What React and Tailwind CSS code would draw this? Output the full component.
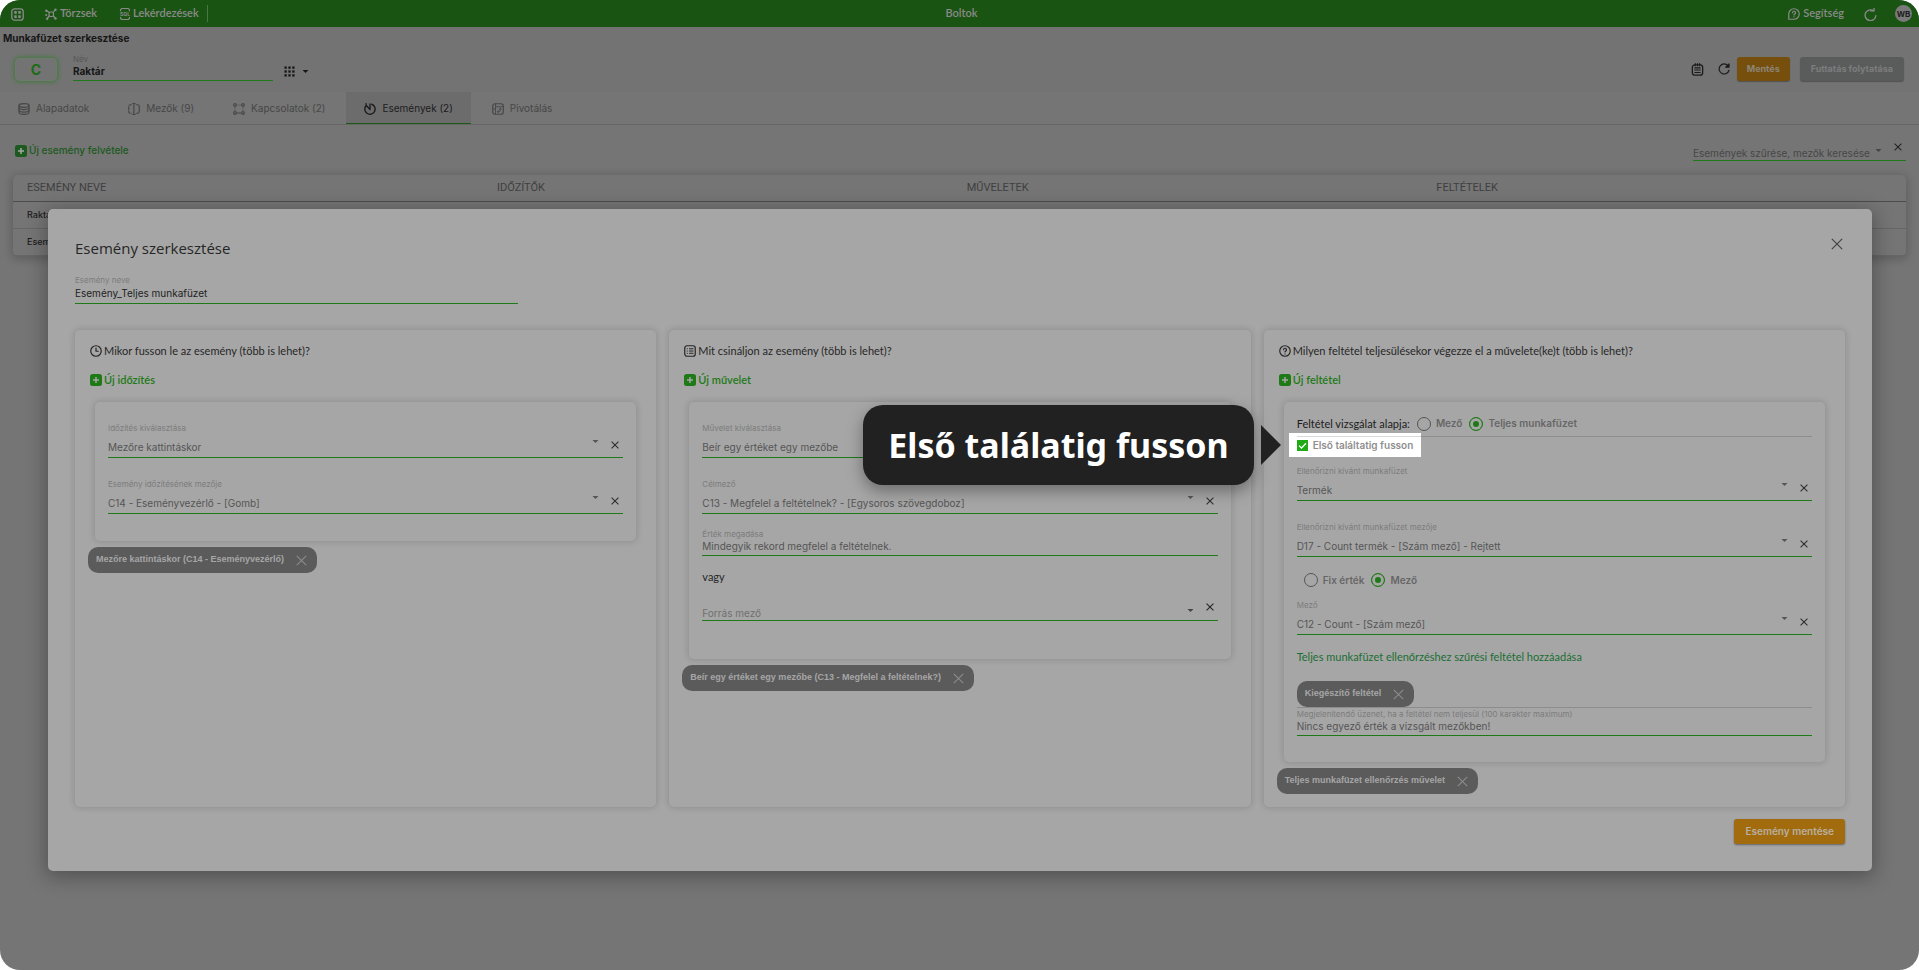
import { useId, useState } from "react";

const tabs = [
  { id: "base", label: "Alapadatok", icon: DatabaseIcon },
  { id: "fields", label: "Mezők (9)", icon: FieldIcon },
  { id: "relations", label: "Kapcsolatok (2)", icon: RelationIcon },
  { id: "events", label: "Események (2)", icon: EventIcon },
  { id: "pivot", label: "Pivotálás", icon: PivotIcon },
];

const columns = ["ESEMÉNY NEVE", "IDŐZÍTŐK", "MŰVELETEK", "FELTÉTELEK"];
const events = ["Raktár", "Esemény"];

/* ---------- icons ---------- */

function Icon({ className = "size-3", children }) {
  return (
    <svg
      viewBox="0 0 24 24"
      fill="none"
      stroke="currentColor"
      strokeWidth="2.4"
      strokeLinecap="round"
      strokeLinejoin="round"
      aria-hidden="true"
      className={`shrink-0 ${className}`}
    >
      {children}
    </svg>
  );
}

function AppsIcon() {
  return (
    <Icon className="size-[13px]">
      <rect x="1.5" y="1.5" width="21" height="21" rx="5" />
      <g fill="currentColor" stroke="none">
        <rect x="6" y="5.5" width="4.6" height="5" rx="1" />
        <rect x="13.4" y="5.5" width="4.6" height="5" rx="1" />
        <rect x="6" y="13.5" width="4.6" height="5" rx="1" />
        <rect x="13.4" y="13.5" width="4.6" height="5" rx="1" />
      </g>
    </Icon>
  );
}

function NetworkIcon() {
  return (
    <Icon>
      <rect x="8" y="8" width="9" height="9" rx="3" />
      <path d="M8.5 9 4 6M16.5 8.5 20 4M8.5 16 5 20M16.5 16 20 19.5" />
      <g fill="currentColor" stroke="none">
        <circle cx="2.6" cy="5.4" r="2.4" />
        <circle cx="21" cy="3.4" r="2.4" />
        <circle cx="2.4" cy="14" r="2" />
        <circle cx="4.4" cy="21.4" r="2.4" />
        <circle cx="21" cy="21" r="2.4" />
      </g>
    </Icon>
  );
}

function SqlIcon() {
  return (
    <Icon>
      <path d="M3 5.5V5a4 4 0 0 1 4-4h10a4 4 0 0 1 4 4v.5M3 18.5v.5a4 4 0 0 0 4 4h10a4 4 0 0 0 4-4v-.5" />
      <text
        x="12"
        y="15.5"
        textAnchor="middle"
        fontSize="10"
        fontWeight="700"
        fontFamily="Inter, sans-serif"
        fill="currentColor"
        stroke="none"
      >
        SQL
      </text>
    </Icon>
  );
}

function HelpBubbleIcon() {
  return (
    <Icon>
      <path d="M1.5 22.5V12A10.5 10.5 0 1 1 12 22.5Z" />
      <path d="M9 9.5a3 3 0 1 1 4.3 2.7c-.9.5-1.3.9-1.3 1.8M12 17.4v.2" />
    </Icon>
  );
}

function ReloadIcon({ className }) {
  return (
    <Icon className={className}>
      <path d="M17.5 5A10 10 0 1 0 22 14" />
      <path d="M12.5 5.4h6V0" />
    </Icon>
  );
}

function RefreshIcon() {
  return (
    <Icon>
      <path d="M20 5.5A10 10 0 1 0 22 14.5" />
      <path d="M22 2v6.5h-6.5Z" fill="currentColor" />
    </Icon>
  );
}

function NotesIcon() {
  return (
    <Icon className="size-[13px]">
      <rect x="2.5" y="3.5" width="19" height="19" rx="4.5" />
      <path d="M7 9h10M7 13h10M7 17.5h10M8 1v4M12 1v4M16 1v4" strokeWidth="2" />
    </Icon>
  );
}

function GridIcon() {
  const steps = [1, 9.5, 18];
  return (
    <Icon className="size-[11px]">
      <g fill="currentColor" stroke="none">
        {steps.map((y) =>
          steps.map((x) => <rect key={`${x}-${y}`} x={x} y={y} width="5" height="5" />)
        )}
      </g>
    </Icon>
  );
}

function DatabaseIcon() {
  return (
    <Icon>
      <ellipse cx="12" cy="5" rx="10" ry="3.6" />
      <path d="M2 5v14c0 2 4.5 3.6 10 3.6s10-1.6 10-3.6V5" />
      <path d="M2 9.7c0 2 4.500 3.6 10 3.6s10-1.6 10-3.6M2 14.500c0 2 4.500 3.6 10 3.6s10-1.6 10-3.6" />
    </Icon>
  );
}

function FieldIcon() {
  return (
    <Icon>
      <path d="M7 3.5H4.5a3 3 0 0 0-3 3v11a3 3 0 0 0 3 3H7" strokeDasharray="5 3" />
      <path d="M16.5 3.5h3a3 3 0 0 1 3 3v11a3 3 0 0 1-3 3h-3M11.8 1v22M9.5 1h4.6M9.5 23h4.6" />
    </Icon>
  );
}

function RelationIcon() {
  return (
    <Icon>
      <circle cx="4" cy="4" r="2.6" />
      <circle cx="20" cy="4" r="2.6" />
      <circle cx="4" cy="20" r="2.6" />
      <circle cx="20" cy="20" r="2.6" />
      <path d="M10 4h.1M14 4h.1M8.5 20h7M4 10v.1M4 14v.1M20 10v.1M20 14v.1" />
    </Icon>
  );
}

function EventIcon() {
  return (
    <Icon>
      <path d="M15.5 2.5A10.3 10.3 0 1 1 4.5 5L12 13V2" strokeWidth="2.8" />
      <path d="m4 1 .5 5" />
    </Icon>
  );
}

function PivotIcon() {
  return (
    <Icon>
      <rect x="1.5" y="1.5" width="21" height="21" rx="4.5" />
      <path d="M7 2v20M7 7.5h15M2 12h5" strokeWidth="1.8" />
      <path d="M16.5 11v3.5a3 3 0 0 1-3 3H11m2-2.2-2.2 2.2 2.200 2M14.5 12.5l2-2 2 2" strokeWidth="1.8" />
    </Icon>
  );
}

function ClockIcon() {
  return (
    <Icon>
      <circle cx="12" cy="12" r="10.5" />
      <path d="M12 6v6.5h4.5" />
    </Icon>
  );
}

function ListIcon() {
  return (
    <Icon>
      <rect x="1.5" y="1.5" width="21" height="21" rx="4.5" />
      <path d="M6.5 7.5h.1M6.5 12h.1M6.5 16.5h.1M11 7.5h7M11 12h7M11 16.5h7" />
    </Icon>
  );
}

function QuestionIcon() {
  return (
    <Icon>
      <circle cx="12" cy="12" r="10.5" />
      <path d="M9 9.5a3 3 0 1 1 4.3 2.7c-.9.5-1.3.9-1.3 1.8M12 17.6v.2" />
    </Icon>
  );
}

function PlusIcon() {
  return (
    <svg viewBox="0 0 12 12" aria-hidden="true" className="size-3 shrink-0">
      <rect width="12" height="12" rx="2.5" fill="currentColor" />
      <path d="M6 3v6M3 6h6" stroke="#a6a6a6" strokeWidth="1.5" />
    </svg>
  );
}

function CrossIcon({ className = "size-2", strokeWidth = 1.3 }) {
  return (
    <svg viewBox="0 0 10 10" aria-hidden="true" className={`shrink-0 ${className}`}>
      <path d="m.7.7 8.600 8.600M9.300.7.7 9.300" stroke="currentColor" strokeWidth={strokeWidth} />
    </svg>
  );
}

function Caret() {
  return (
    <svg viewBox="0 0 8 4" aria-hidden="true" className="h-[3px] w-[7px] shrink-0">
      <path d="M0 0h8L4 4Z" fill="currentColor" />
    </svg>
  );
}

/* ---------- form parts ---------- */

function TextField({
  label,
  value,
  className = "",
  labelClass = "text-[#7c7c7c]",
  inputClass = "h-4 text-[#555]",
}) {
  const id = useId();
  return (
    <div className={`flex flex-col ${className}`}>
      <label htmlFor={id} className={`text-[8px] leading-3 ${labelClass}`}>
        {label}
      </label>
      <input
        id={id}
        defaultValue={value}
        className={`w-full border-b border-[#1e7a17] bg-transparent pb-[3px] text-[10px] leading-3 outline-none ${inputClass}`}
      />
    </div>
  );
}

function SelectField({ label, value, className = "" }) {
  const id = useId();
  return (
    <div className={`flex flex-col ${className}`}>
      <label htmlFor={id} className="text-[8px] leading-3 text-[#7c7c7c]">
        {label}
      </label>
      <div className="flex h-6 items-center border-b border-[#1e7a17] pr-1">
        <select
          id={id}
          className="min-w-0 flex-1 appearance-none bg-transparent pt-0.5 text-[10px] leading-4 text-[#555] outline-none"
        >
          <option>{value}</option>
        </select>
        <span className="pb-2 text-[#555]">
          <Caret />
        </span>
        <button type="button" aria-label="Törlés" className="ml-3 pb-0.5 text-[#2c2c2c]">
          <CrossIcon />
        </button>
      </div>
    </div>
  );
}

function PlainSelect({ label, className = "", color = "text-[#707070]" }) {
  return (
    <div className={`flex h-6 items-center border-b border-[#1e7a17] pr-1 ${className}`}>
      <select
        aria-label={label}
        className={`min-w-0 flex-1 appearance-none bg-transparent pt-2 text-[10px] leading-4 outline-none ${color}`}
      >
        <option>{label}</option>
      </select>
      <span className="pt-1 text-[#444]">
        <Caret />
      </span>
      <button type="button" aria-label="Törlés" className="ml-3 pb-1 text-[#222]">
        <CrossIcon />
      </button>
    </div>
  );
}

function Radio({ name, label, checked, onChange }) {
  return (
    <label className="flex items-center gap-[5px] text-[10px] font-semibold text-[#666]">
      <input
        type="radio"
        name={name}
        checked={checked}
        onChange={onChange}
        className="size-3.5 appearance-none rounded-full border border-[#555] checked:border-[#1e7a17] checked:bg-[#1e7a17] checked:shadow-[inset_0_0_0_3px_#a6a6a6]"
      />
      {label}
    </label>
  );
}

function Chip({ children, className = "" }) {
  return (
    <div
      className={`flex h-[26px] w-fit items-center gap-3 rounded-[10px] bg-[#5b5b5b] pr-2.5 pl-2 font-['Liberation_Sans'] text-[9px] font-bold text-[#a6a6a6] ${className}`}
    >
      {children}
      <button type="button" aria-label="Eltávolítás" className="text-[#8c8c8c]">
        <CrossIcon className="size-[11px]" strokeWidth={1} />
      </button>
    </div>
  );
}

function Card({ icon: HeadIcon, title, action, chip, children, innerClass = "" }) {
  return (
    <section className="rounded-[5px] pt-[13px] pr-5 pb-[13px] shadow-[0_0_6px_1px_rgba(0,0,0,0.14)]">
      <h3 className="ml-[15px] flex h-4 items-center gap-0.5 font-['Lato'] text-[11px] text-[#262626]">
        <HeadIcon />
        {title}
      </h3>
      <button
        type="button"
        className="mt-[13px] ml-[15px] flex h-4 items-center gap-0.5 font-['Lato'] text-[11px] font-semibold text-[#1e7a17]"
      >
        <PlusIcon />
        {action}
      </button>
      <div
        className={`mt-3.5 ml-5 flex flex-col rounded-[5px] px-[13px] shadow-[0_0_6px_1px_rgba(0,0,0,0.14)] ${innerClass}`}
      >
        {children}
      </div>
      <Chip className="mt-1.5 ml-[13px]">{chip}</Chip>
    </section>
  );
}

/* ---------- page ---------- */

function TopBar() {
  return (
    <header className="grid h-[27px] grid-cols-[1fr_auto_1fr] items-center bg-[#1a5413] pr-[7px] pl-[11px] font-['Lato'] text-[11px] font-semibold text-[#8a8a8a]">
      <nav className="flex items-center">
        <a href="#apps" aria-label="Alkalmazások" className="pt-0.5">
          <AppsIcon />
        </a>
        <a href="#masters" className="ml-[21px] flex items-center gap-[3px]">
          <NetworkIcon />
          Törzsek
        </a>
        <a href="#queries" className="ml-[22px] flex items-center gap-0.5">
          <SqlIcon />
          Lekérdezések
        </a>
        <span className="ml-2 h-[17px] border-l border-[#4a7545]" />
      </nav>
      <span>Boltok</span>
      <div className="flex items-center justify-end">
        <a href="#help" className="flex items-center gap-[3px]">
          <HelpBubbleIcon />
          Segítség
        </a>
        <button type="button" aria-label="Frissítés" className="ml-5 pt-0.5">
          <ReloadIcon className="size-[13px]" />
        </button>
        <span className="ml-[18px] grid size-[17px] place-items-center rounded-full bg-[#7a7a7a] font-['Inter'] text-[8px] font-bold text-[#1c1c1c]">
          WB
        </span>
      </div>
    </header>
  );
}

function EditorHeader() {
  return (
    <div className="bg-[#737373] pt-[3px] pb-[11px]">
      <h1 className="ml-[3px] text-[10px] leading-4 font-bold text-[#161616]">Munkafüzet szerkesztése</h1>
      <div className="mt-[7px] flex h-7 items-end px-[15px]">
        <span className="grid h-[23px] w-[42px] place-items-center rounded-[5px] text-[14px] font-bold text-[#1d6b16] shadow-[0_0_4px_1px_#3f7a3a,inset_0_0_2px_#6a8a67]">
          C
        </span>
        <TextField
          label="Név"
          value="Raktár"
          className="ml-4 w-[200px]"
          labelClass="text-[#575757]"
          inputClass="h-4 font-bold text-[#161616]"
        />
        <button type="button" aria-label="Nézet" className="mb-1 ml-[11px] flex items-center gap-[7px] text-[#161616]">
          <GridIcon />
          <Caret />
        </button>
        <div className="ml-auto flex h-6 items-center text-[#1c1c1c]">
          <button type="button" aria-label="Jegyzetek">
            <NotesIcon />
          </button>
          <button type="button" aria-label="Újratöltés" className="ml-3.5">
            <RefreshIcon />
          </button>
          <button
            type="button"
            className="ml-[7px] h-6 rounded-[3px] bg-[#774f0c] px-2.5 text-[9px] font-bold text-[#8c8577] shadow-[0_1px_1px_rgba(0,0,0,0.3)]"
          >
            Mentés
          </button>
          <button
            type="button"
            className="ml-2.5 h-6 rounded-[3px] bg-[#5a5c5c] px-[11px] text-[9px] font-bold text-[#7d7d7d] shadow-[0_1px_1px_rgba(0,0,0,0.3)]"
          >
            Futtatás folytatása
          </button>
        </div>
      </div>
    </div>
  );
}

function EventTable() {
  return (
    <div className="mx-[13px] rounded-[5px] shadow-[0_2px_8px_2px_rgba(0,0,0,0.18)]">
      <table className="w-full table-fixed text-left">
        <colgroup>
          <col className="w-[484px]" />
          <col />
          <col />
          <col />
        </colgroup>
        <thead>
          <tr className="h-[26px] border-b border-[#4c4c4c] font-['Roboto'] text-[11px] leading-4 text-[#3f3f3f]">
            {columns.map((name) => (
              <th key={name} className="font-normal first:pl-3.5">
                {name}
              </th>
            ))}
          </tr>
        </thead>
        <tbody>
          {events.map((name) => (
            <tr key={name} className="h-[27px] border-b border-[#666] text-[9px] leading-4 font-medium text-[#1c1c1c]">
              <td className="pl-3.5">{name}</td>
              <td />
              <td />
              <td />
            </tr>
          ))}
        </tbody>
      </table>
    </div>
  );
}

function Callout({ children }) {
  return (
    <div className="absolute top-1/2 right-full mr-2 flex -translate-y-1/2 items-center gap-[7px]">
      <span className="flex h-20 items-center rounded-[20px] bg-[#212121] px-[25px] font-['Noto_Sans'] text-[34px] font-bold whitespace-nowrap text-white shadow-[0_6px_16px_rgba(0,0,0,0.35)]">
        {children}
      </span>
      <svg viewBox="0 0 20 40" aria-hidden="true" className="h-10 w-5">
        <path d="M0 0 20 20 0 40Z" fill="#212121" />
      </svg>
    </div>
  );
}

function EventDialog() {
  const [basis, setBasis] = useState("book");
  const [source, setSource] = useState("field");
  const [firstHit, setFirstHit] = useState(true);

  return (
    <div
      role="dialog"
      aria-labelledby="dialog-title"
      className="absolute top-[209px] right-[47px] left-12 rounded-[5px] bg-[#a6a6a6] px-[27px] py-[27px] shadow-[0_4px_20px_2px_rgba(0,0,0,0.3)]"
    >
      <div className="flex items-start justify-between">
        <h2 id="dialog-title" className="font-['Open_Sans'] text-[15px] leading-6 text-[#262626]">
          Esemény szerkesztése
        </h2>
        <button type="button" aria-label="Bezárás" className="mt-0.5 mr-0.5 text-[#444]">
          <CrossIcon className="size-3" strokeWidth={1} />
        </button>
      </div>

      <TextField
        label="Esemény neve"
        value="Esemény_Teljes munkafüzet"
        className="mt-3.5 w-1/4"
        inputClass="h-[18px] text-[#222]"
      />

      <div className="mt-[26px] grid grid-cols-3 gap-[13px]">
        <Card
          icon={ClockIcon}
          title="Mikor fusson le az esemény (több is lehet)?"
          action="Új időzítés"
          chip="Mezőre kattintáskor (C14 - Eseményvezérlő)"
          innerClass="gap-5 pt-5 pb-[27px]"
        >
          <SelectField label="Időzítés kiválasztása" value="Mezőre kattintáskor" />
          <SelectField label="Esemény időzítésének mezője" value="C14 - Eseményvezérlő - [Gomb]" />
        </Card>

        <Card
          icon={ListIcon}
          title="Mit csináljon az esemény (több is lehet)?"
          action="Új művelet"
          chip="Beír egy értéket egy mezőbe (C13 - Megfelel a feltételnek?)"
          innerClass="pt-5 pb-[38px]"
        >
          <SelectField label="Művelet kiválasztása" value="Beír egy értéket egy mezőbe" />
          <SelectField
            label="Célmező"
            value="C13 - Megfelel a feltételnek? - [Egysoros szövegdoboz]"
            className="mt-5"
          />
          <TextField label="Érték megadása" value="Mindegyik rekord megfelel a feltételnek." className="mt-3.5" />
          <p className="mt-[13px] font-['Lato'] text-[11px] leading-4 text-[#262626]">vagy</p>
          <PlainSelect label="Forrás mező" className="mt-3" />
        </Card>

        <Card
          icon={QuestionIcon}
          title="Milyen feltétel teljesülésekor végezze el a művelete(ke)t (több is lehet)?"
          action="Új feltétel"
          chip="Teljes munkafüzet ellenőrzés művelet"
          innerClass="pt-3.5 pb-[26px]"
        >
          <div className="relative z-10 flex h-[21px] items-start gap-[7px] border-b border-black/15">
            <span className="font-['Lato'] text-[11px] leading-4 text-[#1c1c1c]">Feltétel vizsgálat alapja:</span>
            <Radio name="basis" label="Mező" checked={basis === "field"} onChange={() => setBasis("field")} />
            <Radio name="basis" label="Teljes munkafüzet" checked={basis === "book"} onChange={() => setBasis("book")} />
          </div>
          <div className="relative -mt-1 -ml-2 flex h-6 w-fit items-center bg-white px-2">
            <label className="flex items-center gap-[5px] text-[10px] font-semibold text-[#8f8f8f]">
              <span className="relative size-[11px]">
                <input
                  type="checkbox"
                  checked={firstHit}
                  onChange={() => setFirstHit(!firstHit)}
                  className="block size-[11px] appearance-none border border-[#1faa16] checked:bg-[#1faa16]"
                />
                <svg viewBox="0 0 11 11" aria-hidden="true" className="pointer-events-none absolute inset-0">
                  <path d="m2 5.600 2.500 2.400L9 3.200" fill="none" stroke="#fff" strokeWidth="1.300" />
                </svg>
              </span>
              Első találtatig fusson
            </label>
            <Callout>Első találatig fusson</Callout>
          </div>
          <SelectField label="Ellenőrizni kívánt munkafüzet" value="Termék" className="mt-2" />
          <SelectField
            label="Ellenőrizni kívánt munkafüzet mezője"
            value="D17 - Count termék - [Szám mező] - Rejtett"
            className="mt-5"
          />
          <div className="mt-4 ml-[7px] flex h-3.5 items-center gap-[7px]">
            <Radio name="source" label="Fix érték" checked={source === "fix"} onChange={() => setSource("fix")} />
            <Radio name="source" label="Mező" checked={source === "field"} onChange={() => setSource("field")} />
          </div>
          <SelectField label="Mező" value="C12 - Count - [Szám mező]" className="mt-3" />
          <a href="#filter" className="mt-3.5 w-fit font-['Lato'] text-[11px] leading-4 text-[#1b6e33]">
            Teljes munkafüzet ellenőrzéshez szűrési feltétel hozzáadása
          </a>
          <Chip className="mt-4">Kiegészítő feltétel</Chip>
          <TextField
            label="Megjelenítendő üzenet, ha a feltétel nem teljesül (100 karakter maximum)"
            value="Nincs egyező érték a vizsgált mezőkben!"
            className="border-t border-black/15"
          />
        </Card>
      </div>

      <div className="mt-3 flex justify-end">
        <button
          type="button"
          className="h-[25px] rounded-[3px] bg-[#a26b0e] px-[11px] text-[10px] font-semibold text-[#b8b0a0] shadow-[0_1px_2px_rgba(0,0,0,0.4)]"
        >
          Esemény mentése
        </button>
      </div>
    </div>
  );
}

export default function App() {
  const [active, setActive] = useState("events");

  return (
    <div className="relative min-h-screen overflow-hidden rounded-[20px] bg-[#757575] font-['Inter',sans-serif]">
      <TopBar />
      <main>
        <EditorHeader />
        <nav className="flex h-[33px] gap-[3px] border-b border-[#666]">
          {tabs.map(({ id, label, icon: TabIcon }) => (
            <button
              key={id}
              type="button"
              onClick={() => setActive(id)}
              className={`flex items-center gap-1.5 border-b px-[18px] pt-0.5 text-[10px] ${
                active === id ? "border-[#1d5a17] bg-[#6c6c6c] text-[#1c1c1c]" : "border-transparent text-[#474747]"
              }`}
            >
              <TabIcon />
              {label}
            </button>
          ))}
        </nav>
        <div className="mt-3 mb-3.5 flex items-end justify-between pr-[13px] pl-[15px]">
          <button type="button" className="flex h-[21px] items-center gap-0.5 text-[10px] font-medium text-[#1c5a20]">
            <PlusIcon />
            Új esemény felvétele
          </button>
          <PlainSelect label="Események szűrése, mezők keresése" className="w-[213px]" color="text-[#474747]" />
        </div>
        <EventTable />
      </main>
      <EventDialog />
    </div>
  );
}
